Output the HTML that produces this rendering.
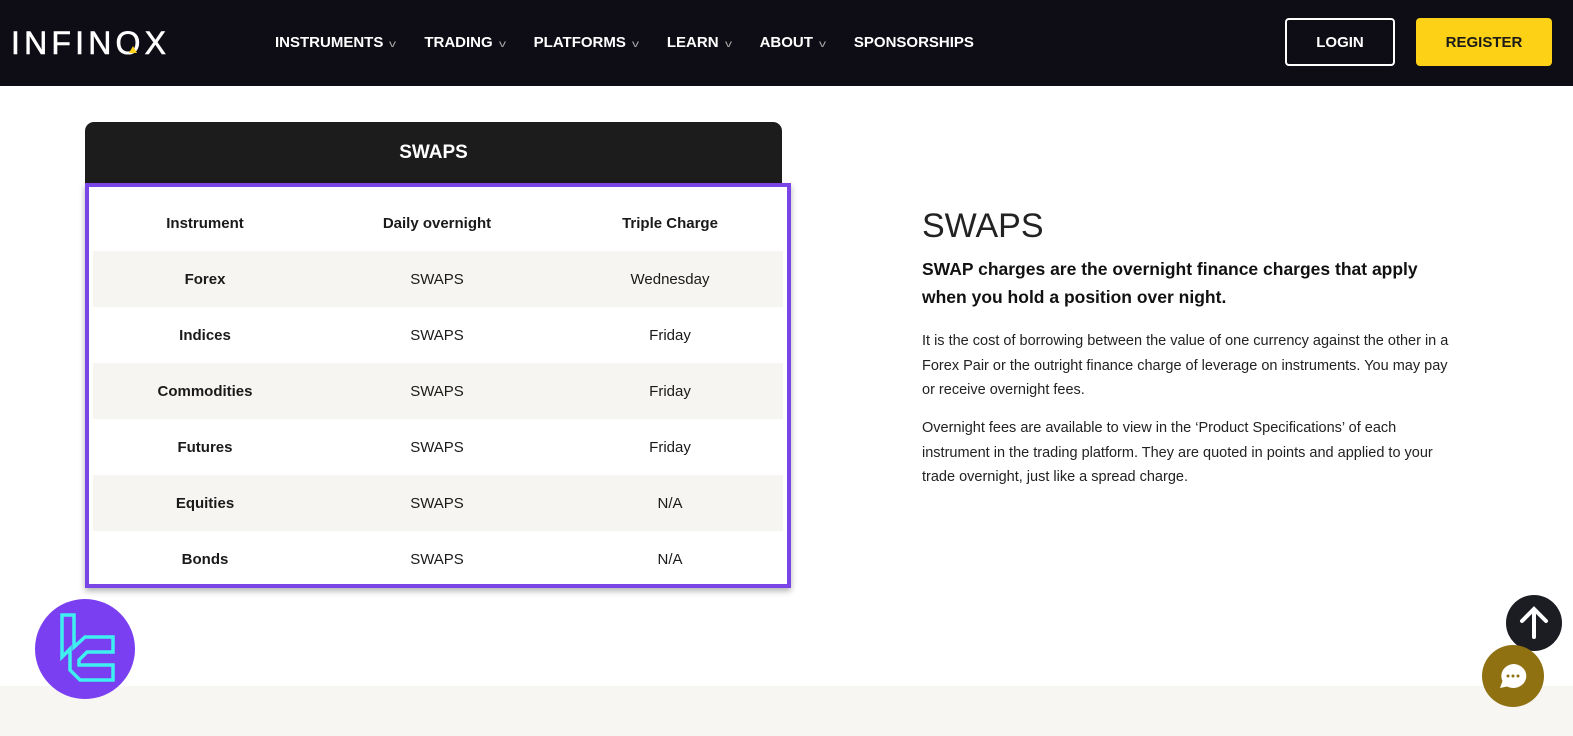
<!DOCTYPE html>
<html><head><meta charset="utf-8"><style>
*{margin:0;padding:0;box-sizing:border-box}
body{width:1573px;height:736px;overflow:hidden;background:#fff;font-family:"Liberation Sans",sans-serif;position:relative;color:#1a1a1a}
.hdr{position:absolute;left:0;top:0;width:1573px;height:86px;background:#0e0d15}
.logo{position:absolute;left:11px;top:25px;color:#fff;font-size:32px;letter-spacing:4.2px;font-weight:400;-webkit-text-stroke:0.6px #fff}
.nav{position:absolute;top:34px;left:275px;color:#fff;font-size:15px;font-weight:bold;display:flex}
.nav span{margin-right:29px;white-space:nowrap}
.nav i{font-style:normal;font-weight:normal;font-size:10px;color:#aaa;margin-left:7px;display:inline-block;transform:scaleX(1.4)}
.btn{position:absolute;top:18px;height:48px;border-radius:4px;font-weight:bold;font-size:15px;display:flex;align-items:center;justify-content:center}
.login{left:1285px;width:110px;border:2px solid #fff;color:#fff}
.reg{left:1416px;width:136px;background:#fcd116;color:#1a1a1a}
.cardh{position:absolute;left:85px;top:122px;width:697px;height:64px;background:#1c1c1c;border-radius:9px 9px 0 0;color:#fff;font-weight:bold;font-size:19px;text-align:center;line-height:62px}
.box{position:absolute;left:85px;top:183px;width:706px;height:405px;border:4px solid #7a45e6;background:#fff;box-shadow:0 3px 6px rgba(0,0,0,.3)}
.row{position:absolute;left:4px;width:690px;height:56px;display:flex;align-items:center;font-size:15px}
.row div{text-align:center}
.c1{width:224px;font-weight:bold}.c2{width:240px}.c3{width:226px}
.g{background:#f6f5f2}
h2{position:absolute;left:922px;top:207px;font-size:34px;font-weight:normal;color:#222}
.sub{position:absolute;left:922px;top:255px;width:535px;font-size:17.5px;font-weight:bold;line-height:28px;color:#111}
.p{position:absolute;left:922px;width:535px;font-size:14.5px;line-height:24.5px;color:#222}
.foot{position:absolute;left:0;top:686px;width:1573px;height:50px;background:#f7f6f3}
.tl{position:absolute;left:35px;top:599px;width:100px;height:100px;border-radius:50%;background:#7b3ff2}
.up{position:absolute;left:1506px;top:595px;width:56px;height:56px;border-radius:50%;background:#1c1d22}
.chat{position:absolute;left:1482px;top:645px;width:62px;height:62px;border-radius:50%;background:#8f7112}
</style></head><body>
<div class="hdr">
<div class="logo">INFINOX</div>
<svg style="position:absolute;left:129px;top:46px" width="8" height="7"><path d="M4 0L8 7H0Z" fill="#fcd116"/></svg>
<div class="nav"><span>INSTRUMENTS<i>v</i></span><span>TRADING<i>v</i></span><span>PLATFORMS<i>v</i></span><span>LEARN<i>v</i></span><span>ABOUT<i>v</i></span><span>SPONSORSHIPS</span></div>
<div class="btn login">LOGIN</div>
<div class="btn reg">REGISTER</div>
</div>
<div class="cardh">SWAPS</div>
<div class="box">
<div class="row" style="top:8px;font-weight:bold"><div class="c1">Instrument</div><div class="c2" style="font-weight:bold">Daily overnight</div><div class="c3" style="font-weight:bold">Triple Charge</div></div>
<div class="row g" style="top:64px"><div class="c1">Forex</div><div class="c2">SWAPS</div><div class="c3">Wednesday</div></div>
<div class="row" style="top:120px"><div class="c1">Indices</div><div class="c2">SWAPS</div><div class="c3">Friday</div></div>
<div class="row g" style="top:176px"><div class="c1">Commodities</div><div class="c2">SWAPS</div><div class="c3">Friday</div></div>
<div class="row" style="top:232px"><div class="c1">Futures</div><div class="c2">SWAPS</div><div class="c3">Friday</div></div>
<div class="row g" style="top:288px"><div class="c1">Equities</div><div class="c2">SWAPS</div><div class="c3">N/A</div></div>
<div class="row" style="top:344px"><div class="c1">Bonds</div><div class="c2">SWAPS</div><div class="c3">N/A</div></div>
</div>
<h2>SWAPS</h2>
<div class="sub">SWAP charges are the overnight finance charges that apply when you hold a position over night.</div>
<div class="p" style="top:329px">It is the cost of borrowing between the value of one currency against the other in a Forex Pair or the outright finance charge of leverage on instruments. You may pay or receive overnight fees.</div>
<div class="p" style="top:416px">Overnight fees are available to view in the ‘Product Specifications’ of each instrument in the trading platform. They are quoted in points and applied to your trade overnight, just like a spread charge.</div>
<div class="foot"></div>
<div class="tl"><svg width="100" height="100" viewBox="0 0 100 100"><path d="M27 16H39V48L50 38H78V53H52L44 61V66H78V81H45L35 71V50L27 58Z" fill="none" stroke="#3ef0f0" stroke-width="3.5" stroke-linejoin="miter"/></svg></div>
<div class="up"><svg width="56" height="56"><path d="M28 42V15M16 26L28 14L40 26" stroke="#fff" stroke-width="4" fill="none" stroke-linecap="round"/></svg></div>
<div class="chat"><svg width="62" height="62"><path d="M31 19a13 12 0 1 1-6 22.5L18 43l2.5-7A13 12 0 0 1 31 19Z" fill="#fff"/><circle cx="26" cy="31" r="1.5" fill="#8f7112"/><circle cx="31" cy="31" r="1.5" fill="#8f7112"/><circle cx="36" cy="31" r="1.5" fill="#8f7112"/></svg></div>
</body></html>
